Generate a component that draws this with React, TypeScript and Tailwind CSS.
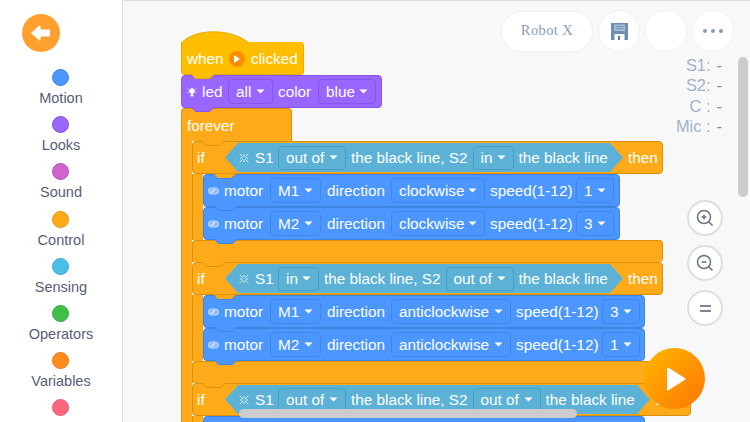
import React from "react";

const categories = [
  ["Motion", "bg-[#4c97ff]", "border-[#3d84e6]"],
  ["Looks", "bg-[#9966ff]", "border-[#7f52e0]"],
  ["Sound", "bg-[#cf63cf]", "border-[#b84fb8]"],
  ["Control", "bg-[#ffab19]", "border-[#e8960c]"],
  ["Sensing", "bg-[#4cbfe6]", "border-[#3aa9cf]"],
  ["Operators", "bg-[#40bf4a]", "border-[#35a83e]"],
  ["Variables", "bg-[#ff8c1a]", "border-[#e87b10]"],
  ["", "bg-[#ff6680]", "border-[#f0566f]"],
];

function Tab({ fill, stroke, left = 9 }: { fill: string; stroke: string; left?: number }) {
  return (
    <svg
      width="24"
      height="5"
      viewBox="0 0 24 5"
      className="absolute z-10 bottom-[-5px]"
      style={{ left }}
    >
      <path d="M0.5 0 L4.5 4.5 L18.5 4.5 L23.5 0" fill={fill} stroke={stroke} strokeWidth="1" />
    </svg>
  );
}

function Caret() {
  return (
    <svg width="9" height="5" viewBox="0 0 9 5" className="shrink-0">
      <path d="M0.5 0.5 H8.5 L4.5 4.5 Z" fill="#fff" />
    </svg>
  );
}

function MotorDrop({ label, w }: { label: string; w: string }) {
  return (
    <span className={`h-[25px] ${w} shrink-0 rounded-[4px] border border-[#4287e8] bg-[#4c97ff] flex items-center justify-between px-[7px]`}>
      {label}
      <Caret />
    </span>
  );
}

function SenseDrop({ label, w }: { label: string; w: string }) {
  return (
    <span className={`h-[24px] ${w} shrink-0 rounded-[4px] border border-[#4a9fc4] bg-[#5cb1d6] flex items-center justify-between px-[7px]`}>
      {label}
      <Caret />
    </span>
  );
}

function LookDrop({ label, w }: { label: string; w: string }) {
  return (
    <span className={`h-[25px] ${w} shrink-0 rounded-[4px] border border-[#8655ee] bg-[#9966ff] flex items-center justify-between px-[7px]`}>
      {label}
      <Caret />
    </span>
  );
}

function MotorIcon() {
  return (
    <svg width="11" height="8" viewBox="0 0 11 8" className="shrink-0">
      <rect x="0.5" y="1" width="10" height="6" rx="3" fill="#8fbcff" stroke="#b9d5ff" strokeWidth="1.2" />
      <path d="M3 6 L7 2" stroke="#dbe9ff" strokeWidth="1.2" />
    </svg>
  );
}

function SensorIcon() {
  return (
    <svg width="10" height="10" viewBox="0 0 10 10" className="shrink-0">
      <g stroke="#cfe8f3" strokeWidth="1">
        <path d="M0.5 0.5 L9.5 9.5 M9.5 0.5 L0.5 9.5 M5 1 V9 M1 5 H9" />
      </g>
      <rect x="3.5" y="3.5" width="3" height="3" fill="#5cb1d6" />
    </svg>
  );
}

function BulbIcon() {
  return (
    <svg width="10" height="12" viewBox="0 0 10 12" className="shrink-0">
      <circle cx="5" cy="5" r="2.8" fill="#fff" />
      <rect x="3.7" y="8" width="2.6" height="2.5" fill="#fff" />
      <path d="M0 2 L1.5 3 M10 2 L8.5 3 M0 7 L1.5 6 M10 7 L8.5 6 M5 0 V1" stroke="#e6dbff" strokeWidth="0.8" />
    </svg>
  );
}

function Motor({
  name,
  dir,
  dirW,
  speed,
  last,
  first,
  blockW,
}: {
  name: string;
  dir: string;
  dirW: string;
  speed: string;
  last?: boolean;
  first?: boolean;
  blockW: string;
}) {
  return (
    <div className={`relative h-[33px] ${blockW} bg-[#4c97ff] border border-[#3f85e0] rounded-[4px] flex items-center pl-[4px] gap-[5px] text-white ${last ? "z-[1]" : "z-[2]"}`}>
      {first && (
        <svg width="24" height="5" viewBox="0 0 24 5" className="absolute top-[-1px] left-[9px]">
          <path d="M0.5 0 L4.5 4.5 L18.5 4.5 L23.5 0" fill="#ffab19" stroke="#3f85e0" strokeWidth="1" />
        </svg>
      )}
      <MotorIcon />
      <span className="w-[41px]">motor</span>
      <MotorDrop label={name} w="w-[51px]" />
      <span className="w-[60px] text-center">direction</span>
      <MotorDrop label={dir} w={dirW} />
      <span className="w-[81px] text-center whitespace-nowrap">speed(1-12)</span>
      <MotorDrop label={speed} w="w-[38px]" />
      <Tab fill="#4c97ff" stroke="#3f85e0" left={10} />
    </div>
  );
}

function Boolean_({
  a,
  aW,
  b,
  bW,
  w,
}: {
  a: string;
  aW: string;
  b: string;
  bW: string;
  w: string;
}) {
  return (
    <div className={`h-[29px] ${w} shrink-0 bg-[#5cb1d6] flex items-center pl-[14px] gap-[5px] text-white [clip-path:polygon(0_50%,13px_0,calc(100%-13px)_0,100%_50%,calc(100%-13px)_100%,13px_100%)]`}>
      <SensorIcon />
      <span className="w-[18px] ml-[1px]">S1</span>
      <SenseDrop label={a} w={aW} />
      <span className="whitespace-nowrap">the black line, S2</span>
      <SenseDrop label={b} w={bW} />
      <span className="whitespace-nowrap">the black line</span>
    </div>
  );
}

function IfHeader({
  a,
  aW,
  b,
  bW,
  w,
  hexW,
}: {
  a: string;
  aW: string;
  b: string;
  bW: string;
  w: string;
  hexW: string;
}) {
  return (
    <div className={`relative h-[33px] ${w} bg-[#ffab19] border border-[#d9900f] rounded-[4px] flex items-center text-white`}>
      <span className="ml-[4px] w-[28px]">if</span>
      <Boolean_ a={a} aW={aW} b={b} bW={bW} w={hexW} />
      <span className="ml-[5px]">then</span>
    </div>
  );
}

function IfFooter({ w }: { w: string }) {
  return (
    <div className={`relative h-[22px] ${w} bg-[#ffab19] border border-[#d9900f] border-b-0 rounded-[4px] rounded-bl-none`}>
      <Tab fill="#ffab19" stroke="#d9900f" left={9} />
    </div>
  );
}

function Canvas() {
  return (
    <div className="w-[510px] pt-[30px] pl-[58px] text-[15.3px] leading-none">
      <svg width="70" height="12" viewBox="0 0 70 12" className="block -mb-px">
        <path d="M0.5 12 C14 -3 50 -3 68 12 Z" fill="#ffbf00" stroke="#e6ac00" strokeWidth="1" />
      </svg>
      <div className="relative z-20 h-[33px] w-[123px] bg-[#ffbf00] border border-[#e6ac00] border-t-0 rounded-[4px] rounded-tl-none flex items-center pl-[5px] pt-[1px] text-white">
        <span className="w-[42px]">when</span>
        <span className="w-[16px] h-[16px] rounded-full bg-[#ff8c00] flex items-center justify-center">
          <svg width="6" height="8" viewBox="0 0 6 8">
            <path d="M0 0 L6 4 L0 8 Z" fill="#fff" />
          </svg>
        </span>
        <span className="ml-[6px]">clicked</span>
        <Tab fill="#ffbf00" stroke="#e6ac00" left={9} />
      </div>
      <div className="relative z-10 h-[33px] w-[201px] bg-[#9966ff] border border-[#8655ee] rounded-[4px] flex items-center pl-[5px] gap-[5px] text-white">
        <BulbIcon />
        <span className="w-[21px]">led</span>
        <LookDrop label="all" w="w-[45px]" />
        <span className="w-[35px]">color</span>
        <LookDrop label="blue" w="w-[58px]" />
        <Tab fill="#9966ff" stroke="#8655ee" left={9} />
      </div>
      <div className="relative h-[33px] w-[111px] bg-[#ffab19] border border-[#d9900f] border-b-0 rounded-t-[4px] flex items-center pl-[5px] pt-[1px] text-white">
        forever
      </div>
      <div className="flex">
        <div className="w-[11px] bg-[#ffab19] border-l border-[#d9900f] shrink-0" />
        <div className="flex flex-col">
          <div className="relative">
            <IfHeader a="out of" aW="w-[68px]" b="in" bW="w-[41px]" w="w-[471px]" hexW="w-[398px]" />
            <svg width="24" height="5" viewBox="0 0 24 5" className="absolute top-0 left-[9px]">
              <path d="M0.5 0 L4.5 4.5 L18.5 4.5 L23.5 0" fill="#ffab19" stroke="#d9900f" strokeWidth="1" />
            </svg>
          </div>
          <div className="flex">
            <div className="w-[11px] bg-[#ffab19] border-l border-[#d9900f] shrink-0" />
            <div className="flex flex-col">
              <Motor name="M1" dir="clockwise" dirW="w-[94px]" speed="1" first blockW="w-[417px]" />
              <Motor name="M2" dir="clockwise" dirW="w-[94px]" speed="3" last blockW="w-[417px]" />
            </div>
          </div>
          <IfFooter w="w-[471px]" />
          <IfHeader a="in" aW="w-[41px]" b="out of" bW="w-[68px]" w="w-[471px]" hexW="w-[398px]" />
          <div className="flex">
            <div className="w-[11px] bg-[#ffab19] border-l border-[#d9900f] shrink-0" />
            <div className="flex flex-col">
              <Motor name="M1" dir="anticlockwise" dirW="w-[120px]" speed="3" first blockW="w-[442px]" />
              <Motor name="M2" dir="anticlockwise" dirW="w-[120px]" speed="1" last blockW="w-[442px]" />
            </div>
          </div>
          <IfFooter w="w-[471px]" />
          <IfHeader a="out of" aW="w-[68px]" b="out of" bW="w-[68px]" w="w-[499px]" hexW="w-[425px]" />
          <div className="flex">
            <div className="w-[11px] bg-[#ffab19] border-l border-[#d9900f] shrink-0" />
            <div className="h-[33px] w-[442px] bg-[#4c97ff] border border-[#3f85e0] rounded-[4px]" />
          </div>
        </div>
      </div>
    </div>
  );
}

export default function App() {
  return (
    <div className="w-[750px] h-[422px] flex overflow-hidden bg-white font-['Liberation_Sans',Arial,sans-serif]">
      <aside className="w-[122px] h-[422px] shrink-0 overflow-hidden flex flex-col items-center bg-white">
        <div className="self-start shrink-0 ml-[22px] mt-[14px] w-[38px] h-[38px] rounded-full bg-[#ff9f2e] flex items-center justify-center">
          <svg width="20" height="16" viewBox="0 0 20 16">
            <path d="M0 8 L9 0 L10 4.5 L19 4.5 L19 11.5 L10 11.5 L9 16 Z" fill="#fff" />
          </svg>
        </div>
        <div className="mt-[17px] shrink-0 flex flex-col items-center">
          {categories.map(([name, bg, border]) => (
            <div key={name || "more"} className="h-[47.2px] flex flex-col items-center">
              <span className={`w-[17px] h-[17px] rounded-full border ${bg} ${border}`} />
              <span className="mt-[4px] text-[14.5px] leading-[17px] text-[#575e75]">{name}</span>
            </div>
          ))}
        </div>
      </aside>
      <main className="relative flex-1 h-[422px] overflow-hidden bg-[#f8f8f9] border-t border-l border-[#dedede]">
        <Canvas />

        <div className="absolute top-[9px] left-[378px] flex items-center gap-[5px]">
          <div className="w-[92px] h-[41px] rounded-full bg-white border border-[#f0f0f0] flex items-center justify-center font-['Liberation_Serif',serif] text-[14.5px] text-[#8c9db3] tracking-[0.4px]">
            Robot X
          </div>
          <div className="w-[42px] h-[42px] rounded-full bg-white border border-[#f2f2f2] flex items-center justify-center">
            <svg width="17" height="17" viewBox="0 0 17 17">
              <path d="M0 0 H17 V17 H0 Z" fill="#6f8db3" />
              <rect x="3" y="1.5" width="11" height="6.5" fill="#a9bdd6" />
              <rect x="4.5" y="3" width="8" height="1" fill="#6f8db3" />
              <rect x="4.5" y="5.2" width="8" height="1" fill="#6f8db3" />
              <rect x="3.5" y="11" width="10" height="6" fill="#fff" />
              <rect x="7" y="13" width="2" height="4" fill="#5c7699" />
            </svg>
          </div>
          <div className="w-[42px] h-[42px] rounded-full bg-white border border-[#f2f2f2]" />
          <div className="w-[42px] h-[42px] rounded-full bg-white border border-[#f2f2f2] flex items-center justify-center gap-[4px]">
            <span className="w-[4px] h-[4px] rounded-full bg-[#8a9bb0]" />
            <span className="w-[4px] h-[4px] rounded-full bg-[#8a9bb0]" />
            <span className="w-[4px] h-[4px] rounded-full bg-[#8a9bb0]" />
          </div>
        </div>

        <div className="absolute top-[54px] right-[28px] flex flex-col items-end text-[16.4px] leading-[20.4px] text-[#9fb3c8]">
          {["S1:", "S2:", "C :", "Mic :"].map((k) => (
            <div key={k} className="flex items-center">
              <span>{k}</span>
              <span className="ml-[6px] text-[#7d8b9a]">-</span>
            </div>
          ))}
        </div>

        <div className="absolute top-[56px] right-[2px] w-[10px] h-[140px] rounded-full bg-[#cccccc]" />
        <div className="absolute top-[408px] left-[116px] w-[338px] h-[9px] rounded-full bg-[#cccccc]" />

        <div className="absolute top-[199px] left-[564px] flex flex-col gap-[9px]">
          <div className="w-[36px] h-[36px] rounded-full bg-white border-2 border-[#dfdfdf] flex items-center justify-center">
            <svg width="20" height="20" viewBox="0 0 20 20" fill="none" stroke="#6b7480" strokeWidth="1.5">
              <circle cx="9" cy="9" r="6.5" />
              <path d="M13.7 13.7 L17.5 17.5 M6.5 9 H11.5 M9 6.5 V11.5" />
            </svg>
          </div>
          <div className="w-[36px] h-[36px] rounded-full bg-white border-2 border-[#dfdfdf] flex items-center justify-center">
            <svg width="20" height="20" viewBox="0 0 20 20" fill="none" stroke="#6b7480" strokeWidth="1.5">
              <circle cx="9" cy="9" r="6.5" />
              <path d="M13.7 13.7 L17.5 17.5 M6.5 9 H11.5" />
            </svg>
          </div>
          <div className="w-[36px] h-[36px] rounded-full bg-white border-2 border-[#dfdfdf] flex flex-col items-center justify-center gap-[3px]">
            <span className="w-[11px] h-[2px] bg-[#7d8590]" />
            <span className="w-[11px] h-[2px] bg-[#7d8590]" />
          </div>
        </div>

        <div className="absolute z-30 top-[347px] left-[521px] w-[61px] h-[61px] rounded-full bg-gradient-to-br from-[#ffb700] to-[#ff7300] flex items-center justify-center">
          <svg width="20" height="24" viewBox="0 0 20 24" className="ml-[2px]">
            <path d="M2 1.5 L18.5 12 L2 22.5 Z" fill="#fff" stroke="#fff" strokeWidth="2" strokeLinejoin="round" />
          </svg>
        </div>
      </main>
    </div>
  );
}
